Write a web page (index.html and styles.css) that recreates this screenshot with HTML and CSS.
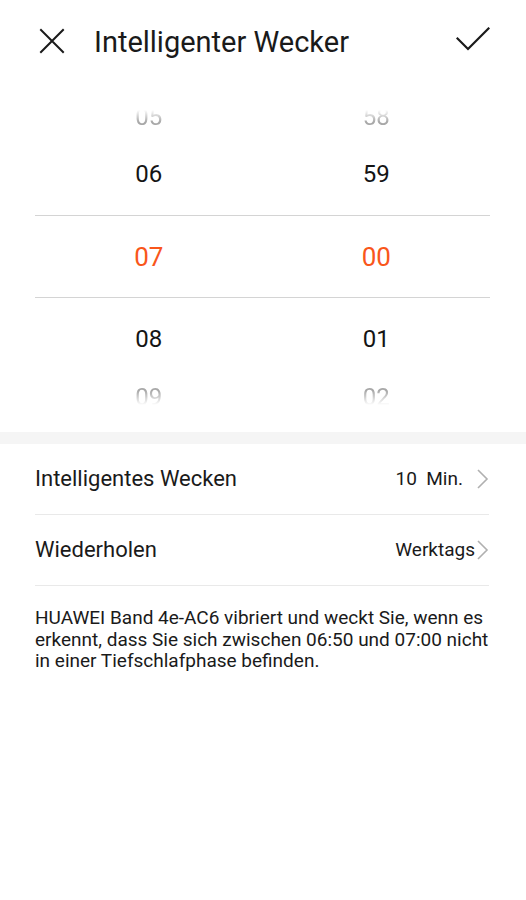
FILE: index.html
```html
<!DOCTYPE html>
<html lang="de">
<head>
<meta charset="utf-8">
<title>Intelligenter Wecker</title>
<link rel="stylesheet" href="styles.css">
</head>
<body>
<div class="screen">
  <header class="topbar">
    <svg class="icon-close" width="26" height="26" viewBox="0 0 26 26" aria-label="Schließen">
      <path d="M2 2 L24 24 M24 2 L2 24" fill="none" stroke="#1a1a1a" stroke-width="2" stroke-linecap="square"/>
    </svg>
    <h1 class="title">Intelligenter Wecker</h1>
    <svg class="icon-check" width="34" height="24" viewBox="0 0 34 24" aria-label="Bestätigen">
      <path d="M1.5 11.5 L12 22 L32.5 1.5" fill="none" stroke="#1a1a1a" stroke-width="2.2" stroke-linecap="square"/>
    </svg>
  </header>

  <section class="picker">
    <div class="edge edge-top">
      <span class="edge-num">05</span>
      <span class="edge-num">58</span>
    </div>
    <div class="row">
      <span class="num">06</span>
      <span class="num">59</span>
    </div>
    <div class="row row-selected">
      <span class="num sel">07</span>
      <span class="num sel">00</span>
    </div>
    <div class="row">
      <span class="num">08</span>
      <span class="num">01</span>
    </div>
    <div class="edge edge-bottom">
      <span class="edge-num">09</span>
      <span class="edge-num">02</span>
    </div>
  </section>

  <div class="band"></div>

  <section class="settings">
    <div class="setting">
      <span class="label">Intelligentes Wecken</span>
      <span class="value value-spaced">10&nbsp; Min.</span>
      <svg class="chev" width="14" height="22" viewBox="0 0 14 22"><path d="M3 2 L12 11 L3 20" fill="none" stroke="#b0b0b0" stroke-width="1.6"/></svg>
    </div>
    <div class="setting">
      <span class="label">Wiederholen</span>
      <span class="value">Werktags</span>
      <svg class="chev" width="14" height="22" viewBox="0 0 14 22"><path d="M3 2 L12 11 L3 20" fill="none" stroke="#b0b0b0" stroke-width="1.6"/></svg>
    </div>
  </section>

  <p class="note">HUAWEI Band 4e-AC6 vibriert und weckt Sie, wenn es erkennt, dass Sie sich zwischen 06:50 und 07:00 nicht in einer Tiefschlafphase befinden.</p>
</div>
</body>
</html>
```

FILE: styles.css
```css
* { box-sizing: border-box; }

html, body {
  margin: 0;
  padding: 0;
  background: #ffffff;
}

body {
  font-family: Roboto, "Noto Sans", "Liberation Sans", sans-serif;
  color: #1a1a1a;
}

.screen {
  width: 526px;
  min-height: 900px;
  display: flex;
  flex-direction: column;
}

.topbar {
  height: 84px;
  display: flex;
  align-items: center;
  padding: 0 36px 0 39px;
}

.icon-close {
  flex: none;
  margin-bottom: 3px;
}

.title {
  flex: 1;
  margin: 0 0 0 29px;
  font-size: 29px;
  font-weight: 400;
  line-height: 36px;
  color: #1a1a1a;
}

.icon-check {
  flex: none;
  margin-bottom: 7px;
}

.picker {
  margin: 0 36px 0 35px;
  padding: 26px 0 27px;
  display: flex;
  flex-direction: column;
}

.row,
.edge {
  display: grid;
  grid-template-columns: 1fr 1fr;
  justify-items: center;
}

.row {
  height: 82px;
  align-items: center;
}

.row-selected {
  height: 83px;
  border-top: 1.5px solid #d4d4d4;
  border-bottom: 1.5px solid #d4d4d4;
}

.num {
  font-size: 24px;
  line-height: 30px;
  color: #141414;
}

.num.sel {
  font-size: 26px;
  color: #f9561b;
}

.edge {
  overflow: hidden;
}

.edge-top {
  height: 16px;
  margin-bottom: 7px;
  -webkit-mask-image: linear-gradient(to bottom, rgba(0,0,0,0) 0%, rgba(0,0,0,1) 75%);
  mask-image: linear-gradient(to bottom, rgba(0,0,0,0) 0%, rgba(0,0,0,1) 75%);
}

.edge-top .edge-num {
  margin-top: -5px;
}

.edge-bottom {
  height: 18px;
  margin-top: 7px;
  -webkit-mask-image: linear-gradient(to bottom, rgba(0,0,0,1) 20%, rgba(0,0,0,0) 100%);
  mask-image: linear-gradient(to bottom, rgba(0,0,0,1) 20%, rgba(0,0,0,0) 100%);
}

.edge-bottom .edge-num {
  margin-top: -2px;
}

.edge-num {
  display: block;
  font-size: 24px;
  line-height: 24px;
  color: #a8a8a8;
}

.band {
  height: 12px;
  background: #f5f5f5;
}

.settings {
  padding: 0 37px 0 35px;
}

.setting {
  height: 71px;
  display: flex;
  align-items: center;
  padding-right: 2px;
  border-bottom: 1px solid #e9e9e9;
}

.label {
  flex: 1;
  font-size: 22px;
  line-height: 28px;
  color: #1a1a1a;
}

.value {
  font-size: 19px;
  line-height: 24px;
  color: #1a1a1a;
}

.value-spaced {
  margin-right: 12px;
}

.chev {
  flex: none;
  margin-right: -2px;
}

.note {
  margin: 21px 0 0;
  padding: 0 35px;
  font-size: 19px;
  line-height: 21.5px;
  color: #1a1a1a;
}
```
